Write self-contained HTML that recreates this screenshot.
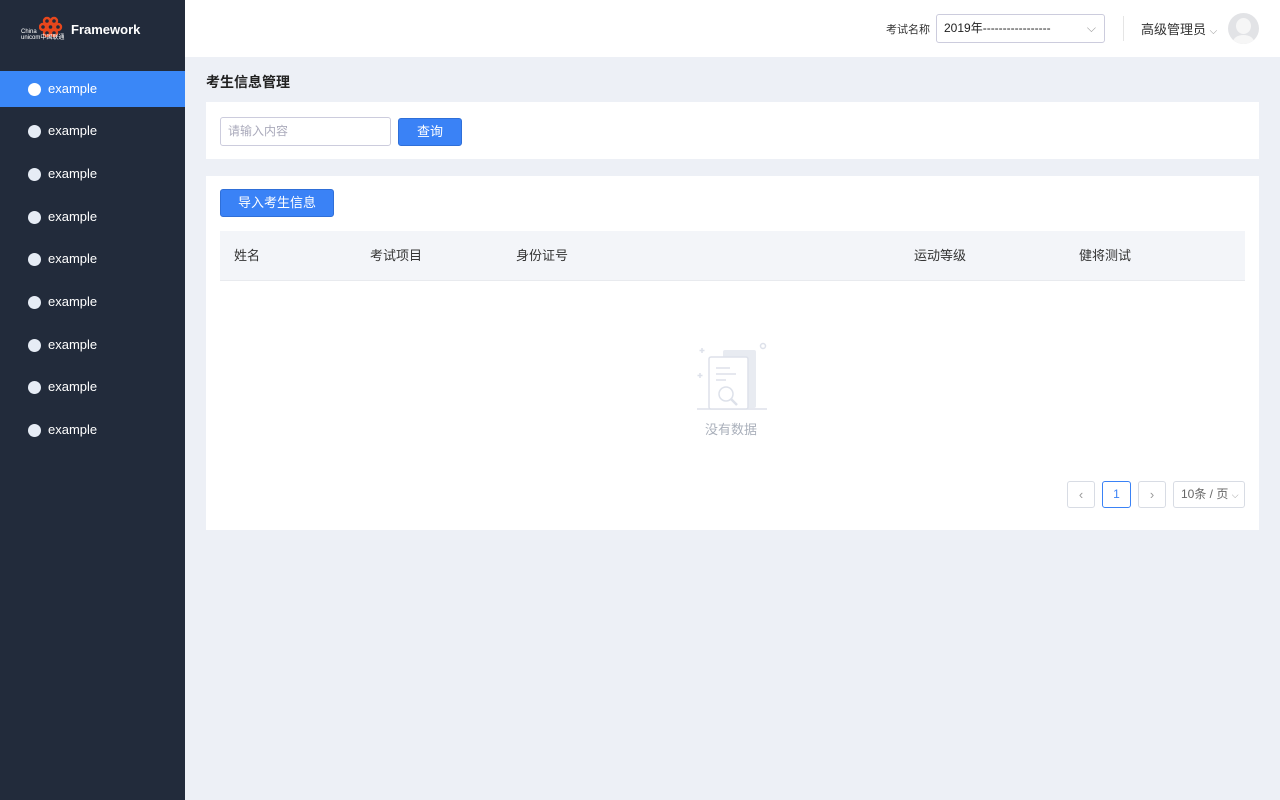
<!DOCTYPE html>
<html><head><meta charset="utf-8"><style>
*{margin:0;padding:0;box-sizing:border-box}
body{width:1280px;height:800px;background:#edf0f6;font-family:"Liberation Sans","Noto Sans CJK SC",sans-serif;font-size:13px;color:#333;position:relative;overflow:hidden}
.side{position:absolute;left:0;top:0;width:185px;height:800px;background:#222b3b}
.logo{height:60px;position:relative}
.logo .t{position:absolute;left:71px;top:22px;color:#fff;font-weight:bold;font-size:13px}
.item{position:absolute;left:0;width:185px;height:36px;color:#fff;font-size:13px;line-height:36px;padding-left:48px}
.item:before{content:"";position:absolute;left:28px;top:12px;width:13px;height:13px;border-radius:50%;background:#e6ecf5}
.item.act{background:#3a87f7}
.item.act:before{background:#fff}
.head{position:absolute;left:185px;top:0;right:0;height:57px;background:#fff}
.title{position:absolute;left:206px;top:72px;font-size:14px;font-weight:bold;color:#222}
.card{position:absolute;left:206px;background:#fff;width:1053px}
.btn{position:absolute;background:#3a82f6;color:#fff;border:1px solid #2f6fd8;border-radius:3px;text-align:center;font-size:13px}
</style></head><body>
<div class="side">
 <div class="logo">
  <svg style="position:absolute;left:39px;top:16px" width="24" height="22" viewBox="0 0 24 22"><g fill="none" stroke="#e8471c" stroke-width="2.4"><circle cx="8" cy="5" r="3"/><circle cx="15" cy="5" r="3"/><circle cx="4" cy="11" r="3"/><circle cx="11.5" cy="11" r="3"/><circle cx="19" cy="11" r="3"/><circle cx="8" cy="17" r="3"/><circle cx="15" cy="17" r="3"/></g></svg>
  <div style="position:absolute;left:21px;top:29px;color:#fff;font-size:6px;line-height:6px">China<br>unicom中国联通</div>
  <div class="t">Framework</div>
 </div>
 <div class="item act" style="top:71px">example</div>
 <div class="item" style="top:113px">example</div>
 <div class="item" style="top:156px">example</div>
 <div class="item" style="top:199px">example</div>
 <div class="item" style="top:241px">example</div>
 <div class="item" style="top:284px">example</div>
 <div class="item" style="top:327px">example</div>
 <div class="item" style="top:369px">example</div>
 <div class="item" style="top:412px">example</div>
</div>
<div class="head">
 <div style="position:absolute;left:701px;top:21px;font-size:11px;color:#333">考试名称</div>
 <div style="position:absolute;left:751px;top:14px;width:169px;height:29px;border:1px solid #ccd;border-radius:3px;font-size:12px;line-height:27px;padding-left:7px;color:#222">2019年-----------------<span style="position:absolute;right:8px;top:0;color:#999">⌵</span></div>
 <div style="position:absolute;left:938px;top:16px;width:1px;height:25px;background:#e5e5e5"></div>
 <div style="position:absolute;left:956px;top:19px;font-size:13px;color:#333">高级管理员 <span style="color:#999;font-size:10px">⌵</span></div>
 <div style="position:absolute;left:1043px;top:13px;width:31px;height:31px;border-radius:50%;background:#e2e3e6;overflow:hidden"><div style="position:absolute;left:8px;top:5px;width:15px;height:16px;border-radius:50%;background:#f6f6f6"></div><div style="position:absolute;left:5px;top:22px;width:21px;height:14px;border-radius:50%;background:#f6f6f6"></div></div>
</div>
<div class="title">考生信息管理</div>
<div class="card" style="top:102px;height:57px">
 <div style="position:absolute;left:14px;top:15px;width:171px;height:29px;border:1px solid #ccd;border-radius:3px;font-size:12px;color:#aab;line-height:27px;padding-left:7px">请输入内容</div>
 <div class="btn" style="left:192px;top:16px;width:64px;height:28px;line-height:26px">查询</div>
</div>
<div class="card" style="top:176px;height:354px">
 <div class="btn" style="left:14px;top:13px;width:114px;height:28px;line-height:26px">导入考生信息</div>
 <div style="position:absolute;left:14px;top:55px;width:1025px;height:50px;background:#f3f5f9;border-bottom:1px solid #e8eaee;font-size:13px;color:#333;line-height:50px">
  <span style="position:absolute;left:14px">姓名</span><span style="position:absolute;left:150px">考试项目</span><span style="position:absolute;left:296px">身份证号</span><span style="position:absolute;left:694px">运动等级</span><span style="position:absolute;left:859px">健将测试</span>
 </div>
 <svg style="position:absolute;left:490px;top:164px" width="74" height="72" viewBox="0 0 74 72"><g fill="none" stroke="#dde1ea" stroke-width="1.5"><path d="M6 8v5M3.5 10.5h5M4 33v5M1.5 35.5h5"/><circle cx="67" cy="6" r="2.5"/><path d="M1 69h70"/></g><rect x="27" y="10" width="33" height="58" rx="2" fill="#e8ebf1"/><rect x="13" y="17" width="39" height="52" rx="2" fill="#fff" stroke="#dde1ea" stroke-width="1.5"/><path d="M20 28h14M20 34h20M20 40h10" stroke="#dde1ea" stroke-width="1.5"/><circle cx="30" cy="54" r="7" fill="#fff" stroke="#dde1ea" stroke-width="1.5"/><path d="M35 59l6 6" stroke="#dde1ea" stroke-width="2.5"/></svg>
 <div style="position:absolute;left:499px;top:243px;font-size:13px;color:#aab0bb">没有数据</div>
 <div style="position:absolute;left:861px;top:305px;width:28px;height:27px;border:1px solid #d8dce4;border-radius:3px;text-align:center;line-height:25px;color:#999">‹</div>
 <div style="position:absolute;left:896px;top:305px;width:29px;height:27px;border:1px solid #3a82f6;border-radius:3px;text-align:center;line-height:25px;color:#3a82f6;font-size:12px">1</div>
 <div style="position:absolute;left:932px;top:305px;width:28px;height:27px;border:1px solid #d8dce4;border-radius:3px;text-align:center;line-height:25px;color:#999">›</div>
 <div style="position:absolute;left:967px;top:305px;width:72px;height:27px;border:1px solid #d8dce4;border-radius:3px;line-height:25px;color:#666;font-size:12px;padding-left:7px">10条 / 页 <span style="font-size:9px;color:#999">⌵</span></div>
</div>
</body></html>
